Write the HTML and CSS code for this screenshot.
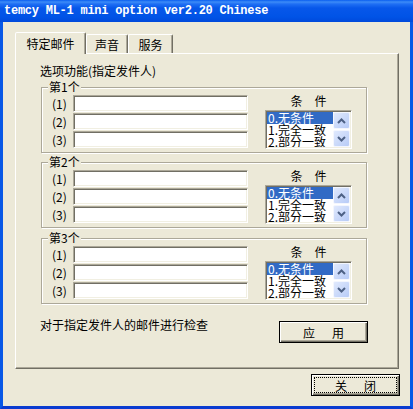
FILE: index.html
```html
<!DOCTYPE html>
<html lang="zh-CN">
<head>
    <meta charset="UTF-8">
    <title>temcy ML-1 mini option</title>
    <link rel="stylesheet" href="styles.css">
</head>
<body>

<div class="window">
    <div class="titlebar">temcy ML-1 mini option ver2.20 Chinese</div>

    <div class="client">
        <!-- Tabs -->
        <div class="tabs">
            <div class="tab active">特定邮件</div>
            <div class="tab tab-sound">声音</div>
            <div class="tab tab-service">服务</div>
        </div>

        <div class="panel">
            <div class="caption">选项功能(指定发件人)</div>

            <fieldset class="group">
                <legend>第1个</legend>
                <div class="group-body">
                    <div class="fields">
                        <div class="field"><span class="num">(1)</span><input class="edit" type="text"></div>
                        <div class="field"><span class="num">(2)</span><input class="edit" type="text"></div>
                        <div class="field"><span class="num">(3)</span><input class="edit" type="text"></div>
                    </div>
                    <div class="cond">
                        <div class="cond-title">条　件</div>
                        <div class="listbox">
                            <ul class="items">
                                <li class="sel">0.无条件</li>
                                <li>1.完全一致</li>
                                <li>2.部分一致</li>
                            </ul>
                            <div class="scroll">
                                <span class="sbtn"><svg width="9" height="6" viewBox="0 0 9 6"><path d="M1 5 L4.5 1.5 L8 5" fill="none" stroke="#4d6185" stroke-width="2"/></svg></span>
                                <span class="sbtn"><svg width="9" height="6" viewBox="0 0 9 6"><path d="M1 1 L4.5 4.5 L8 1" fill="none" stroke="#4d6185" stroke-width="2"/></svg></span>
                            </div>
                        </div>
                    </div>
                </div>
            </fieldset>

            <fieldset class="group">
                <legend>第2个</legend>
                <div class="group-body">
                    <div class="fields">
                        <div class="field"><span class="num">(1)</span><input class="edit" type="text"></div>
                        <div class="field"><span class="num">(2)</span><input class="edit" type="text"></div>
                        <div class="field"><span class="num">(3)</span><input class="edit" type="text"></div>
                    </div>
                    <div class="cond">
                        <div class="cond-title">条　件</div>
                        <div class="listbox">
                            <ul class="items">
                                <li class="sel">0.无条件</li>
                                <li>1.完全一致</li>
                                <li>2.部分一致</li>
                            </ul>
                            <div class="scroll">
                                <span class="sbtn"><svg width="9" height="6" viewBox="0 0 9 6"><path d="M1 5 L4.5 1.5 L8 5" fill="none" stroke="#4d6185" stroke-width="2"/></svg></span>
                                <span class="sbtn"><svg width="9" height="6" viewBox="0 0 9 6"><path d="M1 1 L4.5 4.5 L8 1" fill="none" stroke="#4d6185" stroke-width="2"/></svg></span>
                            </div>
                        </div>
                    </div>
                </div>
            </fieldset>

            <fieldset class="group group-last">
                <legend>第3个</legend>
                <div class="group-body">
                    <div class="fields">
                        <div class="field"><span class="num">(1)</span><input class="edit" type="text"></div>
                        <div class="field"><span class="num">(2)</span><input class="edit" type="text"></div>
                        <div class="field"><span class="num">(3)</span><input class="edit" type="text"></div>
                    </div>
                    <div class="cond">
                        <div class="cond-title">条　件</div>
                        <div class="listbox">
                            <ul class="items">
                                <li class="sel">0.无条件</li>
                                <li>1.完全一致</li>
                                <li>2.部分一致</li>
                            </ul>
                            <div class="scroll">
                                <span class="sbtn"><svg width="9" height="6" viewBox="0 0 9 6"><path d="M1 5 L4.5 1.5 L8 5" fill="none" stroke="#4d6185" stroke-width="2"/></svg></span>
                                <span class="sbtn"><svg width="9" height="6" viewBox="0 0 9 6"><path d="M1 1 L4.5 4.5 L8 1" fill="none" stroke="#4d6185" stroke-width="2"/></svg></span>
                            </div>
                        </div>
                    </div>
                </div>
            </fieldset>

            <div class="footer-row">
                <span class="hint">对于指定发件人的邮件进行检查</span>
                <button class="btn apply"><span>应</span><span>用</span></button>
            </div>
        </div>

        <div class="actions">
            <button class="btn focus"><span>关</span><span>闭</span></button>
        </div>
    </div>
</div>

</body>
</html>
```

FILE: styles.css
```css
body {
    margin: 0;
    font-family: "Noto Sans CJK SC", "Liberation Sans", sans-serif;
    font-size: 12px;
    color: #000;
    background: #ece9d8;
}
.window {
    width: 413px;
    height: 409px;
    display: flex;
    flex-direction: column;
}
.titlebar {
    height: 22px;
    flex: none;
    padding-left: 4px;
    color: #fff;
    font: bold 12px/23px "Liberation Mono", monospace;
    letter-spacing: -0.25px;
    white-space: nowrap;
    background: linear-gradient(to bottom, #0a5ef0 0, #3d8cf7 2px, #1f6ff4 4px, #0757ea 8px, #0053e6 17px, #0049db 22px);
}
.client {
    flex: 1;
    display: flex;
    flex-direction: column;
    padding: 10px 11px 10px 12px;
    background: #ece9d8;
    border: 3px solid #0858e6;
    border-top: 0;
    border-bottom-color: #0a3bd0;
}

/* tabs */
.tabs {
    display: flex;
    align-items: flex-end;
    height: 22px;
    margin-bottom: -1px;
}
.tab {
    height: 19px;
    box-sizing: border-box;
    margin-bottom: 1px;
    padding-top: 3px;
    line-height: 14px;
    text-align: center;
    border: 1px solid;
    border-bottom: 0;
    border-color: #fff #716f64 transparent #fff;
    border-radius: 2px 2px 0 0;
    box-shadow: inset -1px 0 #aca899;
}
.tab.active {
    position: relative;
    z-index: 1;
    width: 71px;
    height: 22px;
    margin-bottom: 0;
    padding-top: 4px;
    background: #ece9d8;
}
.tab-sound {
    width: 42px;
}
.tab-service {
    width: 45px;
}

.panel {
    height: 316px;
    box-sizing: border-box;
    padding: 10px 0 0 24px;
    border: 1px solid;
    border-color: #fff #716f64 #716f64 #fff;
    box-shadow: inset -1px -1px #aca899;
}
.caption {
    line-height: 14px;
}

/* group boxes */
.group {
    width: 326px;
    box-sizing: border-box;
    min-width: 0;
    margin: 2px 0 0 1px;
    padding: 0 14px 3px 10px;
    border: 1px solid #aca899;
    box-shadow: inset 1px 1px #fff, 1px 1px #fff;
}
.group-last {
    margin-top: 3px;
}
.group legend {
    margin-left: -4px;
    padding: 0 1px;
    line-height: 14px;
    background: #ece9d8;
}
.group-body {
    display: flex;
}
.fields {
    display: flex;
    flex-direction: column;
    gap: 1px;
    margin-top: 1px;
}
.field {
    display: flex;
    align-items: center;
    height: 17px;
}
.num {
    width: 21px;
}
.edit {
    width: 175px;
    height: 17px;
    box-sizing: border-box;
    margin: 0;
    padding: 0 2px;
    border: 1px solid;
    border-color: #aca899 #fff #fff #aca899;
    box-shadow: inset 1px 1px #716f64, inset -1px -1px #f1efe2;
    background: #fff;
    font: inherit;
    outline: none;
}
.cond {
    width: 87px;
    margin-left: 17px;
    display: flex;
    flex-direction: column;
    align-items: center;
}
.cond-title {
    line-height: 14px;
}
.listbox {
    width: 87px;
    height: 39px;
    box-sizing: border-box;
    margin-top: 2px;
    padding: 1px;
    display: flex;
    background: #fff;
    border: 1px solid;
    border-color: #aca899 #fff #fff #aca899;
    box-shadow: inset 1px 1px #716f64, inset -1px -1px #f1efe2;
}
.items {
    flex: 1;
    margin: 0;
    padding: 0;
    list-style: none;
    overflow: hidden;
    line-height: 12px;
}
.items li {
    height: 12px;
    padding-left: 1px;
    white-space: nowrap;
}
.items .sel {
    background: #316ac5;
    color: #fff;
}
.scroll {
    width: 17px;
    display: flex;
    flex-direction: column;
    gap: 1px;
}
.sbtn {
    height: 17px;
    box-sizing: border-box;
    display: flex;
    align-items: center;
    justify-content: center;
    border: 1px solid #f3f6fe;
    border-radius: 2px;
    background: linear-gradient(135deg, #e0e9fd, #b7cbf7);
}

/* bottom */
.footer-row {
    width: 328px;
    margin-top: 14px;
    display: flex;
    justify-content: space-between;
    align-items: flex-start;
}
.hint {
    line-height: 14px;
}
.btn {
    width: 89px;
    height: 22px;
    box-sizing: border-box;
    padding: 0;
    display: flex;
    align-items: center;
    justify-content: center;
    gap: 17px;
    font: inherit;
    color: #000;
    background: #ece9d8;
    border: 1px solid #000;
    box-shadow: inset 1px 1px #fff, inset -1px -1px #716f64, inset -2px -2px #aca899;
}
.apply {
    margin-top: 3px;
}
.focus {
    outline: 1px dotted #000;
    outline-offset: -4px;
}
.actions {
    display: flex;
    justify-content: flex-end;
    margin: 5px -1px 0 0;
}
```
